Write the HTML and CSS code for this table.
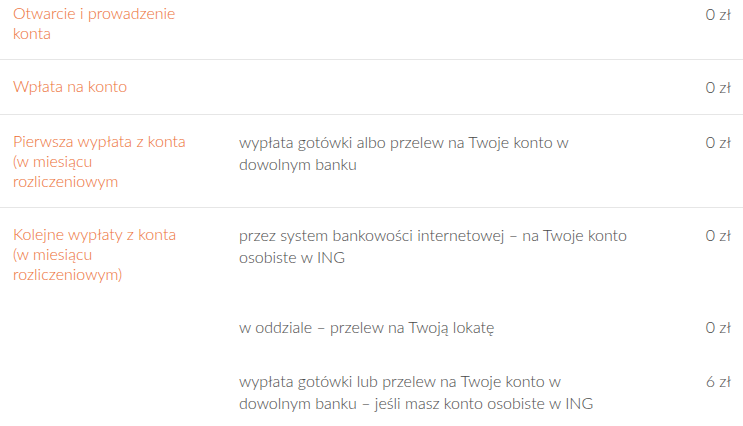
FILE: index.html
```html
<!DOCTYPE html>
<html lang="pl">
<head>
<meta charset="utf-8">
<link rel="stylesheet" href="styles.css">
</head>
<body>
<div class="fees">
  <div class="row first">
    <div class="label">Otwarcie i prowadzenie<br>konta</div>
    <div class="item"><div class="desc"></div><div class="amount">0 zł</div></div>
  </div>
  <div class="row">
    <div class="label">Wpłata na konto</div>
    <div class="item"><div class="desc"></div><div class="amount">0 zł</div></div>
  </div>
  <div class="row">
    <div class="label">Pierwsza wypłata z konta<br>(w miesiącu<br>rozliczeniowym</div>
    <div class="item"><div class="desc">wypłata gotówki albo przelew na Twoje konto w<br>dowolnym banku</div><div class="amount">0 zł</div></div>
  </div>
  <div class="row last">
    <div class="label">Kolejne wypłaty z konta<br>(w miesiącu<br>rozliczeniowym)</div>
    <div class="item"><div class="desc">przez system bankowości internetowej – na Twoje konto<br>osobiste w ING</div><div class="amount">0 zł</div></div>
    <div class="item"><div class="desc">w oddziale – przelew na Twoją lokatę</div><div class="amount">0 zł</div></div>
    <div class="item"><div class="desc">wypłata gotówki lub przelew na Twoje konto w<br>dowolnym banku – jeśli masz konto osobiste w ING</div><div class="amount">6 zł</div></div>
  </div>
</div>
</body>
</html>
```
FILE: styles.css
```css
html, body {
  margin: 0;
  padding: 0;
  background: #ffffff;
}
body {
  font-family: Lato, "Open Sans", sans-serif;
  font-size: 16px;
  font-weight: 300;
}
.fees {
  width: 100%;
}
.row {
  display: grid;
  grid-template-columns: 239px 1fr;
  align-items: start;
  border-bottom: 1px solid #e6e6e6;
}
.row.last {
  border-bottom: none;
}
.label {
  grid-column: 1;
  grid-row: 1;
  padding: 16px 12px 16px 13px;
  color: #ec6f36;
  line-height: 20px;
}
.item {
  grid-column: 2;
  display: flex;
  padding: 16px 12px 16px 0;
}
.row.first .label,
.row.first .item {
  padding-top: 3px;
}
.desc {
  flex: 1;
  color: #4a4a4a;
  line-height: 21.5px;
}
.amount {
  color: #4a4a4a;
  line-height: 22px;
  text-align: right;
  white-space: nowrap;
}
```
